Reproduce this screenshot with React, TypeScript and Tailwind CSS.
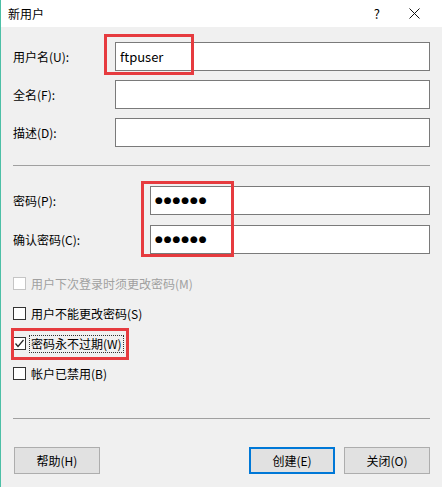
import React from 'react';

const font = { fontFamily: '"Noto Sans CJK SC", "Microsoft YaHei", sans-serif' };

function Field({ label, labelW, value, dots }: { label: string; labelW: string; value?: string; dots?: boolean }) {
  return (
    <div className="flex items-center">
      <div className={`${labelW} text-[12px] text-black`}>{label}</div>
      <div className="flex-1 h-[29px] bg-white border border-[#7a7a7a] flex items-center pl-[4px] text-[13px] text-black">
        {dots ? (
          <span className="text-[9px] tracking-[0.9px] font-['DejaVu_Sans']">●●●●●●</span>
        ) : (
          value
        )}
      </div>
    </div>
  );
}

function Check({ label, checked, disabled, focus }: { label: string; checked?: boolean; disabled?: boolean; focus?: boolean }) {
  return (
    <div className="flex items-center h-[17px]">
      <div
        className={`w-[13px] h-[13px] border bg-white flex items-center justify-center ${
          disabled ? 'border-[#c5c5c5]' : 'border-[#333333]'
        }`}
      >
        {checked && (
          <svg width="11" height="11" viewBox="0 0 11 11">
            <polyline points="1.5,5.5 4,8.5 9.5,2" fill="none" stroke="#222" strokeWidth="1.2" />
          </svg>
        )}
      </div>
      <span
        className={`ml-[3px] px-[1px] text-[12px] leading-[16px] border ${
          focus ? 'border-dotted border-[#333]' : 'border-transparent'
        } ${disabled ? 'text-[#a0a0a0]' : 'text-black'}`}
      >
        {label}
      </span>
    </div>
  );
}

function Btn({ label, primary }: { label: string; primary?: boolean }) {
  return (
    <div
      className={`w-[86px] h-[27px] flex items-center justify-center bg-[#e1e1e1] text-[12px] text-black ${
        primary ? 'border-2 border-[#0078d7]' : 'border border-[#adadad]'
      }`}
    >
      {label}
    </div>
  );
}

export default function App() {
  return (
    <div className="relative w-[442px] h-[487px] bg-[#f0f0f0] border-l border-[#4cbfa6] overflow-hidden" style={font}>
      {/* title bar */}
      <div className="h-[27px] bg-white flex items-center pl-[7px] text-[12px] text-black">
        <span>新用户</span>
        <span className="ml-auto mr-[29px] text-[13px]">?</span>
        <svg className="mr-[22px]" width="11" height="11" viewBox="0 0 11 11">
          <path d="M0.5 0.5L10.5 10.5M10.5 0.5L0.5 10.5" stroke="#111" strokeWidth="1" />
        </svg>
      </div>

      <div className="pl-[12px] pr-[12px]">
        <div className="mt-[15px] flex flex-col gap-[9px]">
          <Field label="用户名(U):" labelW="w-[102px]" value="ftpuser" />
          <Field label="全名(F):" labelW="w-[102px]" />
          <Field label="描述(D):" labelW="w-[102px]" />
        </div>

        <div className="mt-[18px] h-px bg-[#a0a0a0]" />

        <div className="mt-[20px] flex flex-col gap-[10px]">
          <Field label="密码(P):" labelW="w-[137px]" dots />
          <Field label="确认密码(C):" labelW="w-[137px]" dots />
        </div>

        <div className="mt-[21px] flex flex-col gap-[13px]">
          <Check label="用户下次登录时须更改密码(M)" disabled />
          <Check label="用户不能更改密码(S)" />
          <Check label="密码永不过期(W)" checked focus />
          <Check label="帐户已禁用(B)" />
        </div>

        <div className="mt-[36px] h-px bg-[#a0a0a0]" />

        <div className="mt-[28px] flex items-center">
          <div className="ml-[1px]">
            <Btn label="帮助(H)" />
          </div>
          <div className="ml-auto flex gap-[9px]">
            <Btn label="创建(E)" primary />
            <Btn label="关闭(O)" />
          </div>
        </div>
      </div>

      {/* red annotation boxes */}
      <div className="absolute left-[103px] top-[34px] w-[90px] h-[41px] border-[3px] border-[#e63b3f]" />
      <div className="absolute left-[140px] top-[181px] w-[93px] h-[76px] border-[3px] border-[#e63b3f]" />
      <div className="absolute left-[10px] top-[328px] w-[118px] h-[32px] border-[3px] border-[#e63b3f]" />
    </div>
  );
}
